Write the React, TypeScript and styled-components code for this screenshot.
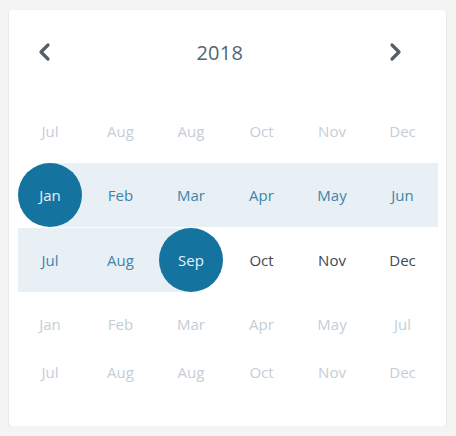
import React from "react";
import styled, { createGlobalStyle } from "styled-components";

const Global = createGlobalStyle`
  html, body { margin: 0; padding: 0; background: #f4f4f4; }
  body { font-family: "Open Sans", "Noto Sans", sans-serif; }
`;

const Page = styled.div`
  padding: 10px 0 0 9px;
`;

const Card = styled.div`
  width: 437px;
  height: 416px;
  box-sizing: border-box;
  background: #fff;
  box-shadow: 0 1px 2px rgba(0, 0, 0, 0.14), 0 0 1px rgba(0, 0, 0, 0.08);
  border-radius: 2px;
  padding: 0 0 0 9px;
`;

const Header = styled.div`
  height: 84px;
  display: flex;
  align-items: center;
  justify-content: space-between;
  padding: 0 42px 0 17.5px;
  box-sizing: border-box;
  width: 428px;
`;

const NavButton = styled.button`
  border: 0;
  background: none;
  padding: 0;
  width: 16px;
  height: 22px;
  display: flex;
  align-items: center;
  justify-content: center;
  cursor: pointer;
`;

const Year = styled.div`
  font-size: 20px;
  color: #4f6676;
  letter-spacing: 0.2px;
`;

const Grid = styled.div`
  display: flex;
  flex-direction: column;
  padding-top: 5px;
`;

const Row = styled.div<{ $h: number; $gapTop?: number }>`
  display: grid;
  grid-template-columns: repeat(6, 70.5px);
  width: 420px;
  height: ${(p) => p.$h}px;
  margin-top: ${(p) => p.$gapTop || 0}px;
  overflow: hidden;
`;

type Band = "none" | "full" | "right" | "left";

const bandBg = (b: Band) => {
  const c = "#e8f0f5";
  if (b === "full") return c;
  if (b === "right") return `linear-gradient(to right, transparent 32px, ${c} 32px)`;
  if (b === "left") return `linear-gradient(to right, ${c} 32px, transparent 32px)`;
  return "transparent";
};

const Cell = styled.div<{ $band: Band }>`
  padding-right: 6.5px;
  background: ${(p) => bandBg(p.$band)};
  display: flex;
  align-items: stretch;
`;

type Tone = "faded" | "range" | "dark" | "selected";

const toneColor: Record<Tone, string> = {
  faded: "#c3ced7",
  range: "#3f84aa",
  dark: "#3d4953",
  selected: "#e9f2f7",
};

const Month = styled.div<{ $tone: Tone }>`
  width: 64px;
  border-radius: 50%;
  display: flex;
  align-items: center;
  justify-content: center;
  font-size: 15px;
  color: ${(p) => toneColor[p.$tone]};
  background: ${(p) => (p.$tone === "selected" ? "#15739f" : "transparent")};
`;

const Chevron = ({ dir }: { dir: "left" | "right" }) => (
  <svg width="16" height="22" viewBox="0 0 16 22">
    <path
      d={dir === "left" ? "M12 4 L5 11 L12 18" : "M4 4 L11 11 L4 18"}
      fill="none"
      stroke="#555e66"
      strokeWidth="3.2"
      strokeLinecap="round"
      strokeLinejoin="round"
    />
  </svg>
);

type C = { m: string; t: Tone; b?: Band };

const rows: { h: number; gap?: number; cells: C[] }[] = [
  {
    h: 64,
    cells: ["Jul", "Aug", "Aug", "Oct", "Nov", "Dec"].map((m) => ({ m, t: "faded" as Tone })),
  },
  {
    h: 64,
    cells: [
      { m: "Jan", t: "selected", b: "right" },
      { m: "Feb", t: "range", b: "full" },
      { m: "Mar", t: "range", b: "full" },
      { m: "Apr", t: "range", b: "full" },
      { m: "May", t: "range", b: "full" },
      { m: "Jun", t: "range", b: "full" },
    ],
  },
  {
    h: 64,
    gap: 1,
    cells: [
      { m: "Jul", t: "range", b: "full" },
      { m: "Aug", t: "range", b: "full" },
      { m: "Sep", t: "selected", b: "left" },
      { m: "Oct", t: "dark" },
      { m: "Nov", t: "dark" },
      { m: "Dec", t: "dark" },
    ],
  },
  {
    h: 64,
    cells: ["Jan", "Feb", "Mar", "Apr", "May", "Jul"].map((m) => ({ m, t: "faded" as Tone })),
  },
  {
    h: 32,
    cells: ["Jul", "Aug", "Aug", "Oct", "Nov", "Dec"].map((m) => ({ m, t: "faded" as Tone })),
  },
];

export default function App() {
  return (
    <Page>
      <Global />
      <Card>
        <Header>
          <NavButton aria-label="Previous year">
            <Chevron dir="left" />
          </NavButton>
          <Year>2018</Year>
          <NavButton aria-label="Next year">
            <Chevron dir="right" />
          </NavButton>
        </Header>
        <Grid>
          {rows.map((r, i) => (
            <Row key={i} $h={r.h} $gapTop={r.gap}>
              {r.cells.map((c, j) => (
                <Cell key={j} $band={c.b || "none"}>
                  <Month $tone={c.t}>{c.m}</Month>
                </Cell>
              ))}
            </Row>
          ))}
        </Grid>
      </Card>
    </Page>
  );
}
